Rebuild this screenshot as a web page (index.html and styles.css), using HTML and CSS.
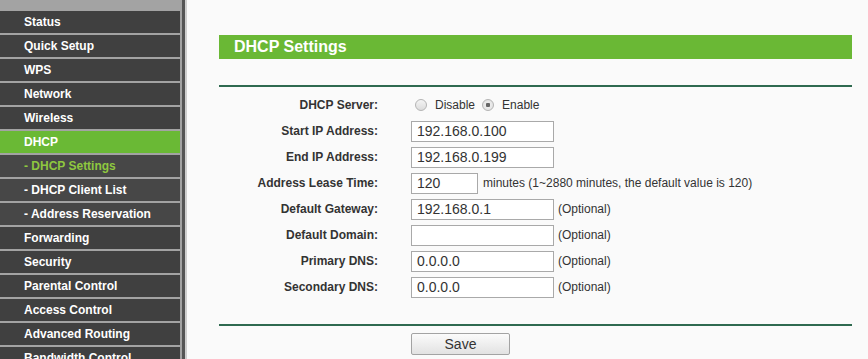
FILE: index.html
```html
<!DOCTYPE html>
<html lang="en">
<head>
  <meta charset="UTF-8" />
  <title>DHCP Settings</title>
  <link rel="stylesheet" href="styles.css">
</head>
<body>
  <div class="page">
    <!-- Left Menu -->
    <div class="sidebar">
      <ul class="menu">
        <li>Status</li>
        <li>Quick Setup</li>
        <li>WPS</li>
        <li>Network</li>
        <li>Wireless</li>
        <li class="active">DHCP</li>
        <li class="sub current">- DHCP Settings</li>
        <li class="sub">- DHCP Client List</li>
        <li class="sub">- Address Reservation</li>
        <li>Forwarding</li>
        <li>Security</li>
        <li>Parental Control</li>
        <li>Access Control</li>
        <li>Advanced Routing</li>
        <li>Bandwidth Control</li>
      </ul>
    </div>

    <!-- Main Content -->
    <div class="main">
      <div class="title-bar">DHCP Settings</div>
      <div class="spacer"></div>
      <div class="form">
        <div class="row">
          <label class="label">DHCP Server:</label>
          <div class="field">
            <input type="radio" name="dhcp" class="radio first">
            <span class="radio-text">Disable</span>
            <input type="radio" name="dhcp" class="radio" checked>
            <span class="radio-text">Enable</span>
          </div>
        </div>
        <div class="row">
          <label class="label">Start IP Address:</label>
          <div class="field"><input type="text" class="text" value="192.168.0.100"></div>
        </div>
        <div class="row">
          <label class="label">End IP Address:</label>
          <div class="field"><input type="text" class="text" value="192.168.0.199"></div>
        </div>
        <div class="row">
          <label class="label">Address Lease Time:</label>
          <div class="field">
            <input type="text" class="text short" value="120">
            <span class="note">minutes (1~2880 minutes, the default value is 120)</span>
          </div>
        </div>
        <div class="row">
          <label class="label">Default Gateway:</label>
          <div class="field"><input type="text" class="text" value="192.168.0.1"><span class="hint">(Optional)</span></div>
        </div>
        <div class="row">
          <label class="label">Default Domain:</label>
          <div class="field"><input type="text" class="text" value=""><span class="hint">(Optional)</span></div>
        </div>
        <div class="row">
          <label class="label">Primary DNS:</label>
          <div class="field"><input type="text" class="text" value="0.0.0.0"><span class="hint">(Optional)</span></div>
        </div>
        <div class="row">
          <label class="label">Secondary DNS:</label>
          <div class="field"><input type="text" class="text" value="0.0.0.0"><span class="hint">(Optional)</span></div>
        </div>
      </div>
      <div class="footer">
        <button class="save-btn">Save</button>
      </div>
    </div>
  </div>
</body>
</html>
```

FILE: styles.css
```css
body {
  margin: 0;
  padding: 0;
  font-family: "Liberation Sans", Arial, sans-serif;
  font-size: 12px;
  color: #333;
  background: #fafafa;
  overflow: hidden;
}

.page {
  display: flex;
  height: 359px;
}

/* Left Menu */
.sidebar {
  width: 182px;
  flex-shrink: 0;
  background: #a3a3a3;
  border-right: 3px solid #555;
  box-shadow: 2px 0 0 #cfcfcf;
}

.menu {
  list-style: none;
  margin: 0;
  padding: 11px 2px 0 0;
}

.menu li {
  height: 22px;
  line-height: 22px;
  margin-bottom: 2px;
  padding-left: 24px;
  background: #404040;
  color: #fff;
  font-weight: bold;
  font-size: 12px;
  white-space: nowrap;
}

.menu li.active {
  background: #6ab935;
}

.menu li.sub {
  background: #474747;
}

.menu li.current {
  color: #8fc83f;
}

/* Main Content */
.main {
  flex: 1;
  padding: 35px 16px 0 34px;
}

.title-bar {
  height: 24px;
  line-height: 24px;
  background: #6ab835;
  color: #fff;
  font-size: 16px;
  font-weight: bold;
  padding-left: 15px;
}

.spacer {
  height: 26px;
  border-bottom: 2px solid #2f6a50;
}

.form {
  padding: 5px 0 24px;
  border-bottom: 2px solid #2f6a50;
}

.row {
  display: flex;
  align-items: center;
  height: 26px;
}

.label {
  width: 159px;
  padding-right: 33px;
  text-align: right;
  font-weight: bold;
  flex-shrink: 0;
}

.field {
  display: flex;
  align-items: center;
}

.text {
  box-sizing: border-box;
  width: 143px;
  height: 21px;
  border: 1px solid #a9a9a9;
  background: #fff;
  padding: 0 5px;
  font-family: "Liberation Sans", Arial, sans-serif;
  font-size: 14px;
  color: #333;
  margin: 0;
}

.text.short {
  width: 67px;
}

.note {
  margin-left: 5px;
}

.hint {
  margin-left: 4px;
}

.radio {
  appearance: none;
  -webkit-appearance: none;
  box-sizing: border-box;
  width: 12px;
  height: 12px;
  margin: 0 0 0 7px;
  border: 1px solid #b4b4b4;
  border-radius: 50%;
  background: linear-gradient(#f4f4f4, #dcdcdc);
}

.radio.first {
  margin-left: 4px;
}

.radio:checked {
  background: radial-gradient(circle, #666 0, #666 2px, #ececec 2.5px, #dcdcdc 100%);
}

.radio-text {
  margin-left: 8px;
}

.footer {
  padding: 7px 0 0 192px;
}

.save-btn {
  width: 99px;
  height: 22px;
  border: 1px solid #a3a3a3;
  border-radius: 2px;
  background: linear-gradient(#fbfbfb, #e2e2e2);
  font-family: "Liberation Sans", Arial, sans-serif;
  font-size: 14px;
  color: #333;
  padding: 0;
  cursor: pointer;
}
```
